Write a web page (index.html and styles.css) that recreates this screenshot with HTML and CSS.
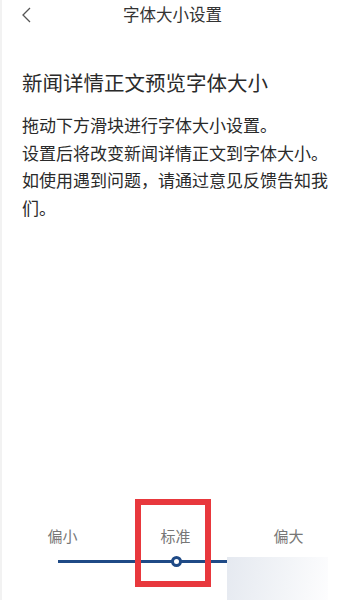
FILE: index.html
```html
<!DOCTYPE html>
<html lang="zh-CN">
<head>
    <meta charset="UTF-8">
    <meta name="viewport" content="width=device-width, initial-scale=1.0">
    <title>字体大小设置</title>
    <link rel="stylesheet" href="styles.css">
</head>
<body>
    <div class="page">
        <div class="topbar">
            <span class="back">
                <svg width="12" height="18" viewBox="0 0 12 18">
                    <path d="M10 2 L3 9 L10 16" fill="none" stroke="#555" stroke-width="1.3"/>
                </svg>
            </span>
            <span class="title">字体大小设置</span>
        </div>

        <div class="preview">
            <h1 class="heading">新闻详情正文预览字体大小</h1>
            <p class="desc">拖动下方滑块进行字体大小设置。<br>设置后将改变新闻详情正文到字体大小。<br>如使用遇到问题，请通过意见反馈告知我们。</p>
        </div>

        <div class="slider">
            <div class="labels">
                <span>偏小</span>
                <span>标准</span>
                <span>偏大</span>
            </div>
            <div class="track">
                <span class="thumb"></span>
            </div>
            <!-- 标注框 -->
            <div class="mark"></div>
        </div>
        <div class="fade"></div>
    </div>
</body>
</html>
```

FILE: styles.css
```css
* {
    box-sizing: border-box;
}

body {
    margin: 0;
    background: #fff;
    font-family: "Noto Sans CJK SC", "Noto Sans", sans-serif;
    color: #333;
}

.page {
    position: relative;
    height: 600px;
    overflow: hidden;
    display: flex;
    flex-direction: column;
    border-left: 2px solid #f2f2f2;
}

.topbar {
    position: relative;
    height: 28px;
    display: flex;
    align-items: center;
    justify-content: center;
}

.back {
    position: absolute;
    left: 18px;
    top: 5px;
}

.title {
    font-size: 16.5px;
    color: #333;
}

.preview {
    padding: 39px 12px 0 20px;
}

.heading {
    margin: 0;
    font-size: 20.5px;
    font-weight: normal;
    line-height: 30px;
    color: #2a2a2a;
}

.desc {
    margin: 14px 0 0;
    font-size: 17px;
    line-height: 27.5px;
    color: #2a2a2a;
}

.slider {
    position: relative;
    margin-top: auto;
    height: 80px;
}

.labels {
    display: grid;
    grid-template-columns: repeat(3, 113px);
    padding-left: 4px;
    font-size: 15px;
    color: #777;
    height: 30px;
    align-items: center;
    justify-items: center;
}

.track {
    position: relative;
    margin: 10px 0 0 56px;
    width: 240px;
    height: 3px;
    background: #1f4a86;
}

.thumb {
    position: absolute;
    left: 113px;
    top: -4px;
    width: 11px;
    height: 11px;
    border: 3px solid #1f4a86;
    border-radius: 50%;
    background: #fff;
}

.mark {
    position: absolute;
    left: 133px;
    top: -21px;
    width: 76px;
    height: 88px;
    border: 6px solid #e8383d;
}

.fade {
    position: absolute;
    left: 225px;
    top: 557px;
    width: 101px;
    height: 43px;
    background: linear-gradient(100deg, #e5e9f0, #f3f5f8 60%, #fdfdfe);
}
```
